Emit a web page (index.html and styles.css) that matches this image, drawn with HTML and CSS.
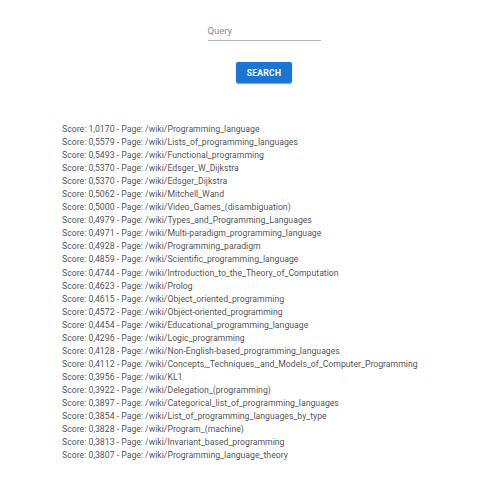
FILE: index.html
```html
<!DOCTYPE html>
<html>
<head>
<meta charset="utf-8">
<link rel="stylesheet" href="styles.css">
</head>
<body>
<div class="app">
  <form class="search">
    <div class="field">
      <span class="label">Query</span>
    </div>
    <button type="button" class="btn">SEARCH</button>
  </form>
  <ul class="results">
    <li>Score: 1,0170 - Page: /wiki/Programming_language</li>
    <li>Score: 0,5579 - Page: /wiki/Lists_of_programming_languages</li>
    <li>Score: 0,5493 - Page: /wiki/Functional_programming</li>
    <li>Score: 0,5370 - Page: /wiki/Edsger_W_Dijkstra</li>
    <li>Score: 0,5370 - Page: /wiki/Edsger_Dijkstra</li>
    <li>Score: 0,5062 - Page: /wiki/Mitchell_Wand</li>
    <li>Score: 0,5000 - Page: /wiki/Video_Games_(disambiguation)</li>
    <li>Score: 0,4979 - Page: /wiki/Types_and_Programming_Languages</li>
    <li>Score: 0,4971 - Page: /wiki/Multi-paradigm_programming_language</li>
    <li>Score: 0,4928 - Page: /wiki/Programming_paradigm</li>
    <li>Score: 0,4859 - Page: /wiki/Scientific_programming_language</li>
    <li>Score: 0,4744 - Page: /wiki/Introduction_to_the_Theory_of_Computation</li>
    <li>Score: 0,4623 - Page: /wiki/Prolog</li>
    <li>Score: 0,4615 - Page: /wiki/Object_oriented_programming</li>
    <li>Score: 0,4572 - Page: /wiki/Object-oriented_programming</li>
    <li>Score: 0,4454 - Page: /wiki/Educational_programming_language</li>
    <li>Score: 0,4296 - Page: /wiki/Logic_programming</li>
    <li>Score: 0,4128 - Page: /wiki/Non-English-based_programming_languages</li>
    <li>Score: 0,4112 - Page: /wiki/Concepts,_Techniques,_and_Models_of_Computer_Programming</li>
    <li>Score: 0,3956 - Page: /wiki/KL1</li>
    <li>Score: 0,3922 - Page: /wiki/Delegation_(programming)</li>
    <li>Score: 0,3897 - Page: /wiki/Categorical_list_of_programming_languages</li>
    <li>Score: 0,3854 - Page: /wiki/List_of_programming_languages_by_type</li>
    <li>Score: 0,3828 - Page: /wiki/Program_(machine)</li>
    <li>Score: 0,3813 - Page: /wiki/Invariant_based_programming</li>
    <li>Score: 0,3807 - Page: /wiki/Programming_language_theory</li>
  </ul>
</div>
</body>
</html>
```
FILE: styles.css
```css
html, body {
  margin: 0;
  padding: 0;
  background: #fff;
  font-family: Roboto, "Liberation Sans", sans-serif;
}
.app {
  width: 500px;
  height: 500px;
}
.search {
  display: flex;
  flex-direction: column;
  align-items: center;
  padding-top: 24px;
  padding-left: 28px;
  margin: 0;
}
.field {
  width: 113px;
  height: 16px;
  border-bottom: 1px solid #b5b5b5;
  display: flex;
  align-items: flex-end;
}
.label {
  font-size: 9.5px;
  color: #8a8a8a;
  line-height: 12px;
  padding-bottom: 3px;
}
.btn {
  margin-top: 21px;
  width: 56px;
  height: 21px;
  border: none;
  border-radius: 2px;
  background: #1976d2;
  color: #fff;
  font-family: Roboto, "Liberation Sans", sans-serif;
  font-weight: 700;
  font-size: 8.5px;
  letter-spacing: 0.3px;
  padding: 0;
  box-shadow: 0 2px 1px -1px rgba(0,0,0,0.2), 0 1px 1px 0 rgba(0,0,0,0.14), 0 1px 3px 0 rgba(0,0,0,0.12);
}
.results {
  list-style: none;
  margin: 40px 0 0 0;
  padding: 0 0 0 62px;
  font-size: 8.7px;
  line-height: 13.04px;
  color: rgba(0,0,0,0.72);
}
```
